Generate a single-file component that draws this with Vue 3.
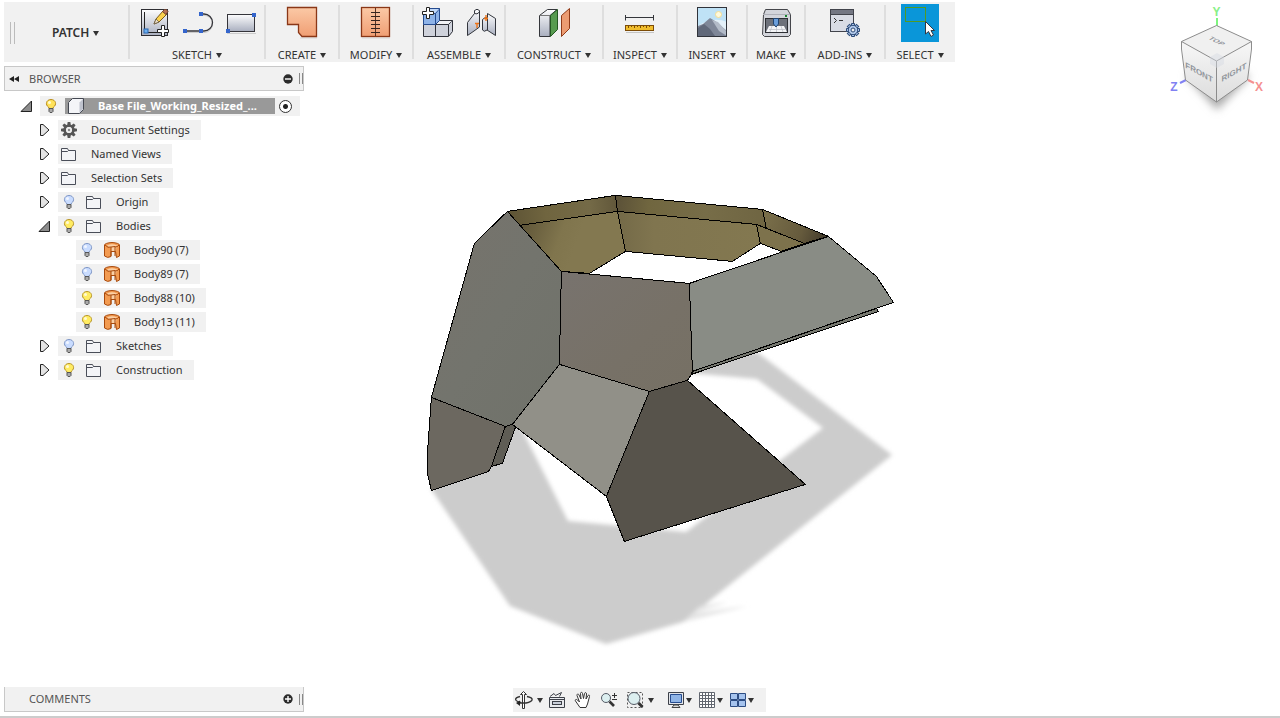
<script setup>
import { ref } from 'vue'

const groups = [
  { id: 'sketch', label: 'SKETCH', icons: ['newSketch', 'line', 'rect'] },
  { id: 'create', label: 'CREATE', icons: ['patch'] },
  { id: 'modify', label: 'MODIFY', icons: ['stitch'] },
  { id: 'assemble', label: 'ASSEMBLE', icons: ['component', 'joint'] },
  { id: 'construct', label: 'CONSTRUCT', icons: ['plane'] },
  { id: 'inspect', label: 'INSPECT', icons: ['measure'] },
  { id: 'insert', label: 'INSERT', icons: ['image'] },
  { id: 'make', label: 'MAKE', icons: ['printer'] },
  { id: 'addins', label: 'ADD-INS', icons: ['script'] },
  { id: 'select', label: 'SELECT', icons: ['select'] },
]

const tree = ref([
  { level: 1, name: 'Document Settings', icon: 'gear', open: false },
  { level: 1, name: 'Named Views', icon: 'folder', open: false },
  { level: 1, name: 'Selection Sets', icon: 'folder', open: false },
  { level: 1, name: 'Origin', icon: 'folder', bulb: 'off', open: false },
  { level: 1, name: 'Bodies', icon: 'folder', bulb: 'on', open: true },
  { level: 2, name: 'Body90 (7)', icon: 'body', bulb: 'off' },
  { level: 2, name: 'Body89 (7)', icon: 'body', bulb: 'off' },
  { level: 2, name: 'Body88 (10)', icon: 'body', bulb: 'on' },
  { level: 2, name: 'Body13 (11)', icon: 'body', bulb: 'on' },
  { level: 1, name: 'Sketches', icon: 'folder', bulb: 'off', open: false },
  { level: 1, name: 'Construction', icon: 'folder', bulb: 'on', open: false },
])

const teeth = [0, 45, 90, 135, 180, 225, 270, 315]

function toggleBulb(row) {
  row.bulb = row.bulb === 'on' ? 'off' : 'on'
}
</script>

<template>
  <div class="app">
    <svg class="scene" viewBox="0 0 1280 718" role="img" aria-label="Model">
      <defs>
        <filter id="soft" x="-10%" y="-10%" width="120%" height="120%"><feGaussianBlur stdDeviation="2" /></filter>
        <linearGradient id="gLeft" x1="0" y1="0" x2="1" y2="1"><stop offset="0" stop-color="#77736c" /><stop offset=".5" stop-color="#73746d" /><stop offset="1" stop-color="#70726a" /></linearGradient>
        <linearGradient id="gRimA" gradientUnits="userSpaceOnUse" x1="507" y1="215" x2="617" y2="205"><stop offset="0" stop-color="#5d5335" /><stop offset=".35" stop-color="#70653f" /><stop offset=".75" stop-color="#746a47" /><stop offset="1" stop-color="#61573a" /></linearGradient>
        <linearGradient id="gRimB" gradientUnits="userSpaceOnUse" x1="615" y1="205" x2="765" y2="220"><stop offset="0" stop-color="#5b5138" /><stop offset=".22" stop-color="#70663f" /><stop offset=".6" stop-color="#776d48" /><stop offset="1" stop-color="#6f6542" /></linearGradient>
        <linearGradient id="gRimC" gradientUnits="userSpaceOnUse" x1="763" y1="215" x2="827" y2="240"><stop offset="0" stop-color="#7a6f4a" /><stop offset=".6" stop-color="#665b3d" /><stop offset="1" stop-color="#40382a" /></linearGradient>
        <linearGradient id="gWallA" gradientUnits="userSpaceOnUse" x1="520" y1="225" x2="575" y2="245"><stop offset="0" stop-color="#5f5538" /><stop offset=".7" stop-color="#80754d" /><stop offset="1" stop-color="#837850" /></linearGradient>
        <linearGradient id="gWallB" gradientUnits="userSpaceOnUse" x1="618" y1="240" x2="760" y2="240"><stop offset="0" stop-color="#746a48" /><stop offset=".25" stop-color="#80754f" /><stop offset="1" stop-color="#837850" /></linearGradient>
        <linearGradient id="gMid" x1="0" y1="0" x2="1" y2="1"><stop offset="0" stop-color="#78736e" /><stop offset=".6" stop-color="#777167" /><stop offset="1" stop-color="#767064" /></linearGradient>
      </defs>

      <g filter="url(#soft)">
        <path fill="#ccc" fill-rule="evenodd" d="M431 489L510 606L606 644L683 622L892 455L757 352L690 350L512 400ZM519 424L568 521L686 532L823 428L757 379L690 373Z" />
        <path fill="#e4e4e4" d="M683 622L748 606L694 613L728 602L700 606Z" />
      </g>

      <g class="edges" transform="translate(.4 .4)">
        <path fill="url(#gWallA)" d="M507 211L519 225L617 211L625 251L589 273L561 271Z" />
        <path fill="url(#gWallB)" d="M617 211L756 224L760 243L732 261L625 251Z" />
        <path fill="#7d724c" d="M756 224L766 228L804 243L781 251L760 243Z" />
        <path fill="url(#gRimA)" d="M507 211L615 195L617 211L519 225Z" />
        <path fill="url(#gRimB)" d="M615 195L762 209L766 228L756 224L617 211Z" />
        <path fill="url(#gRimC)" d="M762 209L828 236L804 243L766 228Z" />
        <path fill="url(#gLeft)" d="M507 211L474 243L431 397L505 426L512 424L559 364L561 271Z" />
        <path fill="url(#gMid)" d="M561 271L689 283L692 371L691 374L687 380L649 391L559 364Z" />
        <path fill="#898c85" d="M689 283L828 236L876 276L893 302L692 371Z" />
        <path fill="#777970" d="M692 371L876 308L878 311L691 374Z" />
        <path fill="#919088" d="M559 364L649 391L606 496L512 424Z" />
        <path fill="#57534b" d="M649 391L687 380L805 484L624 541L606 496Z" />
        <path fill="#6c6860" d="M431 397L505 426L491 466L488 471L431 490L427 473V453Z" />
        <path fill="#5f5d55" d="M505 426L512 424L515 427L502 463L491 466Z" />
      </g>
    </svg>

    <header class="toolbar">
      <div class="workspace">
        <span class="grip"></span>
        <button class="label strong">PATCH<i class="caret"></i></button>
      </div>
      <div v-for="g in groups" :key="g.id" class="group">
        <div class="icons">
          <button v-for="ic in g.icons" :key="ic" class="tool" :aria-label="ic">
            <svg viewBox="0 0 38 38" width="38" height="38" fill="none">
              <defs>
                <linearGradient id="steel" x1="0" y1="0" x2="0" y2="1"><stop offset="0" stop-color="#fdfdfe" /><stop offset="1" stop-color="#a9afbf" /></linearGradient>
                <linearGradient id="peach" x1="0" y1="0" x2="0" y2="1"><stop offset="0" stop-color="#fbc9a6" /><stop offset="1" stop-color="#f09e73" /></linearGradient>
              </defs>
              <g v-if="ic === 'newSketch'">
                <rect x="6.500" y="5.500" width="26" height="26" fill="url(#steel)" stroke="#2e2e33" />
                <path d="M9.500 8V28.500H30" stroke="#222" />
                <rect x="9" y="25" width="4" height="4" fill="#6db0ef" stroke="#2767b4" />
                <path d="M19 20L21 15L28 7L32 10L24 18Z" fill="#fbd24c" stroke="#7b5a19" />
                <path d="M27.500 7.500L29.500 5.500H31.500L33 7.500L31 10.500Z" fill="#b97455" stroke="#714231" />
                <path d="M21 15L24 18L19 20Z" fill="#ece0c8" stroke="#5d5140" stroke-width=".7" />
                <path d="M26.500 21.500H29.500V25.500H33.500V28.500H29.500V32.500H26.500V28.500H22.500V25.500H26.500Z" fill="#fff" stroke="#222" />
              </g>
              <g v-else-if="ic === 'line'">
                <path d="M8 28.500H27C37 27 37 13 27 11.500H23" stroke="#ccc" />
                <path d="M7 27H26A8.500 8.500 0 0 0 26 10H23" stroke="#34343a" stroke-width="1.300" />
                <path d="M5 25h4v4h-4zM21 25h4v4h-4zM21 8h4v4h-4z" fill="#3465cc" />
              </g>
              <g v-else-if="ic === 'rect'">
                <path d="M6 29.500H35" stroke="#ccc" />
                <rect x="6.500" y="10.500" width="27" height="17" fill="url(#steel)" stroke="#34343a" />
                <path d="M5 25h4v4h-4zM31 9h4v4h-4z" fill="#3465cc" />
              </g>
              <g v-else-if="ic === 'patch'">
                <path d="M17 34H34" stroke="#d8d8d8" />
                <path d="M4.500 3.500H33.500V32.500H19L15.500 28.500V20.500H4.500Z" fill="url(#peach)" stroke="#8a3717" stroke-width="1.300" />
              </g>
              <g v-else-if="ic === 'stitch'">
                <path d="M5 34H33" stroke="#d8d8d8" />
                <rect x="4.500" y="3.500" width="28" height="29" fill="url(#peach)" stroke="#8a3717" stroke-width="1.300" />
                <path d="M18.500 4V32" stroke="#5b3425" />
                <path d="M14 8.500H23M14 12.500H23M14 16.500H23M14 20.500H23M14 24.500H23M14 28.500H23" stroke="#34241f" />
              </g>
              <g v-else-if="ic === 'component'" stroke="#30323a" stroke-linejoin="round">
                <path d="M16.500 20.500L20.500 16.500H33.500V27.500L29.500 32.500H4.500V20.500Z" fill="#cfd2db" />
                <path d="M16.500 32V20.500H29.500V32M29.500 20.500L33.500 16.500" />
                <path d="M17 20L21 17H33L29 20Z" fill="#f1f2f5" stroke="none" />
                <path d="M4.500 20.500V9.500L9.500 4.500H20.500V16.500L16.500 20.500Z" fill="#8eb3e8" stroke="#254b8f" />
                <path d="M4.500 9.500H16.500V20.500M16.500 9.500L20.500 4.500" stroke="#254b8f" />
                <path d="M6 9L10 5H20L16 9Z" fill="#c1d8f8" stroke="none" />
                <path d="M7.500 3.500H10.500V7.500H14.500V10.500H10.500V14.500H7.500V10.500H3.500V7.500H7.500Z" fill="#fff" stroke="#222" />
              </g>
              <g v-else-if="ic === 'joint'" stroke="#33363d" stroke-linejoin="round">
                <path d="M5.500 31.500V18.500L12.500 9.500V6.500Q15 4 17.500 6.500V23L12 27Z" fill="url(#steel)" />
                <path d="M12.500 9.500Q15 11 17.500 8" />
                <path d="M20.500 15.500Q22 13.500 25.500 13.500V9.500L33.500 14.500V31.500L25 26Q22 28.500 20.500 26Z" fill="url(#steel)" />
                <path d="M25.500 14V26" />
                <path d="M13 19.500H17M15 19V24M24 11V17M22 14.500H26" stroke="#ef7417" stroke-width="1.400" />
              </g>
              <g v-else-if="ic === 'plane'" stroke-linejoin="round">
                <path d="M4.500 11.500L12.500 5.500H22L15 11.500V32.500H4.500Z" fill="url(#steel)" stroke="#34363b" />
                <path d="M15.500 11.500L22.500 5.500V25.500L15.500 32.500Z" fill="#579b50" stroke="#245823" />
                <path d="M4.500 11.500H15" stroke="#777" />
                <path d="M26.500 11.500L34.500 4.500V24.500L26.500 32.500Z" fill="#ec9c72" stroke="#913b18" />
              </g>
              <g v-else-if="ic === 'measure'">
                <path d="M4.500 11V16.500M32.500 11V16.500M4.500 13.500H32.500" stroke="#34363b" />
                <path d="M5 28.500H33" stroke="#c5c5c5" />
                <rect x="4.500" y="21.500" width="28" height="5" fill="#f0bd2c" stroke="#7c4c08" />
                <path d="M7.500 22V24M10.500 22V23M13.500 22V24M16.500 22V23M19.500 22V24M22.500 22V23M25.500 22V24M28.500 22V23" stroke="#7c4c08" />
              </g>
              <g v-else-if="ic === 'image'">
                <rect x="5" y="4" width="29" height="28" fill="#bfe2f6" />
                <path d="M5 22Q20 12 34 18V32H5Z" fill="#e4f1f9" />
                <circle cx="25.500" cy="10.500" r="3" fill="#fff9dc" stroke="#f5de93" />
                <path d="M5 22L10 20L17 14L22 17L34 27V32H5Z" fill="#7f8798" />
                <path d="M5 24L11 20L17 25L22 32H5Z" fill="#606879" />
                <path d="M19 16L25 18L34 28V32L26 27Z" fill="#b3bbc8" />
                <rect x="4.500" y="3.500" width="29" height="29" stroke="#30333a" />
              </g>
              <g v-else-if="ic === 'printer'">
                <path d="M6.500 10.500L8.500 5.500H30.500L33.500 10.500V30.500L31.500 32.500H7.500L5.500 30.500Z" fill="#d3d5db" stroke="#45464b" />
                <path d="M6 10.500H33" stroke="#aeb0b8" />
                <rect x="8.500" y="14.500" width="22" height="14" fill="#6d717a" stroke="#2d2f34" />
                <path d="M12 22H27L30 28H9Z" fill="#f3f4f6" />
                <path d="M12 25.500H28M15 22L13 28M24 22L26 28M19.500 22V28" stroke="#b9bcc4" stroke-width=".7" />
                <path d="M16.500 14.500H21.500V20L19 23L16.500 20Z" fill="#6a9edb" stroke="#214572" />
                <path d="M28 11h2v2h-2z" fill="#16852d" />
              </g>
              <g v-else-if="ic === 'script'">
                <rect x="4.500" y="5.500" width="23" height="22" fill="#d9dce5" stroke="#42444c" />
                <path d="M5 6H27V10H5Z" fill="#747783" />
                <path d="M5 10.500H27" stroke="#42444c" />
                <path d="M8 14L10.500 16.500L8 19M13 16.500H17" stroke="#333" />
                <g transform="translate(27 26)">
                  <path v-for="a in teeth" :key="a" :transform="`rotate(${a})`" d="M-1.500 -4V-6.500H1.500V-4" fill="#b4cbec" stroke="#2c4a78" />
                  <circle r="4.700" fill="#b4cbec" stroke="#2c4a78" />
                  <circle r="2" fill="#f1f1f1" stroke="#2c4a78" />
                </g>
              </g>
              <g v-else>
                <rect width="38" height="38" fill="#0a96d9" />
                <rect x="4.500" y="3.500" width="20" height="14" stroke="#529a22" />
                <path d="M24.500 17.500V30L27.500 27.500L30 32.500L32.500 31L30 26.500H33.500Z" fill="#fff" stroke="#303842" stroke-linejoin="round" />
              </g>
            </svg>
          </button>
        </div>
        <button class="label">{{ g.label }}<i class="caret"></i></button>
      </div>
    </header>

    <aside class="browser">
      <div class="panel">
        <button class="bare rewind" aria-label="Collapse">
          <svg viewBox="0 0 10 6" width="10" height="6"><path d="M5 0V6L0 3ZM10 0V6L5 3Z" fill="#222" /></svg>
        </button>
        <span class="title">BROWSER</span>
        <button class="bare" aria-label="Hide browser">
          <svg viewBox="0 0 10 10" width="10" height="10"><circle cx="5" cy="5" r="4.700" fill="#2b2b2b" /><path d="M2 5H8" stroke="#fff" stroke-width="1.400" /></svg>
        </button>
        <span class="grip small"></span>
      </div>

      <ul class="tree">
        <li class="row level0">
          <button class="bare toggle open" aria-label="Collapse document"><svg viewBox="0 0 13 13" width="13" height="13"><path d="M11.500 1V11.500H1Z" fill="#8c8c8c" stroke="#222" /></svg></button>
          <div class="item root">
            <button class="bare bulb" aria-label="Visibility">
              <svg viewBox="0 0 12 16" width="12" height="16"><path d="M4 10.500L3.500 9C0 7 1 1.500 6 1.500S12 7 8.500 9L8 10.500Z" fill="#ffe25a" stroke="#b98d1c" /><circle cx="4.500" cy="4.500" r="1.500" fill="#fffbd5" /><path d="M4 10.500H8V13.500L7 14.500H5L4 13.500Z" fill="#aaa" stroke="#555" /></svg>
            </button>
            <span class="selected">
              <svg viewBox="0 0 18 18" width="18" height="18"><path d="M1.500 5.500L5.500 1.500H16.500V12.500L12.500 16.500H1.500Z" fill="#f4f5f8" stroke="#444852" stroke-linejoin="round" /><path d="M12.500 5.500L16 2V12L12.500 16Z" fill="#bfc3ce" /></svg>
              <span>Base File_Working_Resized_...</span>
            </span>
            <input type="radio" name="active" checked aria-label="Activate component">
          </div>
        </li>
        <li v-for="row in tree" :key="row.name" class="row" :class="'level' + row.level">
          <button v-if="row.level === 1" class="bare toggle" :class="{ open: row.open }" :aria-label="'Toggle ' + row.name">
            <svg v-if="row.open" viewBox="0 0 13 13" width="13" height="13"><path d="M11.500 1V11.500H1Z" fill="#8c8c8c" stroke="#222" /></svg>
            <svg v-else viewBox="0 0 10 14" width="10" height="14"><path d="M.500 1.500H3L9 7L3 12.500H.500Z" fill="#e3e3e3" stroke="#222" /></svg>
          </button>
          <span v-else class="toggle"></span>
          <div class="item">
            <button v-if="row.bulb" class="bare bulb" :aria-label="row.name + ' visibility'" @click="toggleBulb(row)">
              <svg viewBox="0 0 12 16" width="12" height="16">
                <path d="M4 10.500L3.500 9C0 7 1 1.500 6 1.500S12 7 8.500 9L8 10.500Z" :fill="row.bulb === 'on' ? '#ffec62' : '#c9dcff'" :stroke="row.bulb === 'on' ? '#b9962a' : '#7e96c6'" />
                <circle cx="4.500" cy="4.500" r="1.500" fill="#fff" fill-opacity=".75" />
                <path d="M4 10.500H8V13.500L7 14.500H5L4 13.500Z" fill="#aaa" stroke="#555" />
              </svg>
            </button>
            <svg class="kind" viewBox="0 0 18 18" width="18" height="18" fill="none">
              <template v-if="row.icon === 'gear'">
                <g transform="translate(9 9)" fill="#555"><path v-for="a in teeth" :key="a" :transform="`rotate(${a})`" d="M-2 -4L-1.300 -8H1.300L2 -4Z" /></g>
                <circle cx="9" cy="9" r="4.200" stroke="#555" stroke-width="2.600" />
                <circle cx="9" cy="9" r="2.900" fill="#eee" />
                <circle cx="9" cy="9" r="1.200" fill="#888" />
              </template>
              <template v-else-if="row.icon === 'folder'">
                <path d="M1.500 15.500V3.500H7.500L8.500 5.500H15.500V15.500Z" fill="#f3f4f7" stroke="#4a4e59" stroke-linejoin="round" />
                <path d="M2 6.500H7.500L8.500 5.500" stroke="#4a4e59" />
              </template>
              <template v-else>
                <path d="M1.500 4Q2 2 9 1.500Q16 2 16.500 4V15L13.500 16.500L12.500 10.500H8V15.500Q4.500 17.500 1.500 15Z" fill="#f39b51" stroke="#a84a0d" stroke-linejoin="round" />
                <path d="M4 4.500Q9 2 14 4.500L12.500 10H8V6.500Q6 7 4 4.500Z" fill="#fbd0a5" />
                <path d="M2 4Q5 7.500 8 6V15M8 6L12 5.500V15M12 6Q15 6 16 4" stroke="#a84a0d" />
              </template>
            </svg>
            <span class="name">{{ row.name }}</span>
          </div>
        </li>
      </ul>
    </aside>

    <svg class="cube" viewBox="0 0 110 120" width="110" height="120" role="img" aria-label="View cube">
      <defs>
        <filter id="cubeSoft" x="-30%" y="-30%" width="160%" height="160%"><feGaussianBlur stdDeviation="4" /></filter>
        <linearGradient id="cubeSide" x1="0" y1="0" x2="0" y2="1"><stop offset="0" stop-color="#f7f7f7" /><stop offset="1" stop-color="#dcdcdc" /></linearGradient>
      </defs>
      <path d="M16 76L47 62L80 76L47 110Z" fill="#aaa" filter="url(#cubeSoft)" />
      <path d="M47 18V26" stroke="#7df57d" stroke-width="2" />
      <path d="M16 80L10 83" stroke="#8181f2" stroke-width="2" />
      <path d="M78 80L84 83" stroke="#f59090" stroke-width="2" />
      <path d="M11.500 41.500L46.500 61V102L15.500 80Z" fill="url(#cubeSide)" />
      <path d="M81.500 41.500L46.500 61V102L77.500 80Z" fill="url(#cubeSide)" />
      <path d="M46.500 25.500L81.500 41.500L46.500 61L11.500 41.500Z" fill="#f0f0f0" />
      <path d="M46.500 25.500L81.500 41.500V49L77.500 80L46.500 102L15.500 80L11.500 49V41.500ZM11.500 41.500L46.500 61L81.500 41.500M46.500 61V102" fill="none" stroke="#8c8c8c" stroke-linejoin="round" />
      <path d="M47 53L54 57V64L47 68L40 64V57Z" fill="#d5dae2" fill-opacity=".45" />
      <text class="face" transform="translate(29 71) skewY(29)" text-anchor="middle" y="4">FRONT</text>
      <text class="face" transform="translate(64 71) skewY(-29)" text-anchor="middle" y="4">RIGHT</text>
      <text class="face" transform="matrix(.85 .42 -.75 .42 47 41)" text-anchor="middle" y="3">TOP</text>
      <text class="axis" x="46.500" y="16" text-anchor="middle" fill="#88f088">Y</text>
      <text class="axis" x="89" y="91" text-anchor="middle" fill="#f59090">X</text>
      <text class="axis" x="4" y="91" text-anchor="middle" fill="#8181f2">Z</text>
    </svg>

    <footer class="bottom">
      <div class="panel comments">
        <span class="title">COMMENTS</span>
        <button class="bare" aria-label="Show comments">
          <svg viewBox="0 0 10 10" width="10" height="10"><circle cx="5" cy="5" r="4.700" fill="#2b2b2b" /><path d="M2 5H8M5 2V8" stroke="#fff" stroke-width="1.400" /></svg>
        </button>
        <span class="grip small"></span>
      </div>

      <nav class="navbar" aria-label="Navigation">
        <button class="bare nav tight" aria-label="Orbit">
          <svg viewBox="0 0 20 20" width="20" height="20" fill="none"><path d="M8.500 18.500V4.500H6.500L9.500 1.500L12.500 4.500H10.500V18.500Z" fill="#fff" stroke="#333" /><path d="M6 6.500C0 8 0 11 7 12.500M13 6.500C20 8 20 11 12 13H5" stroke="#333" stroke-width="1.300" /><path d="M6 10.500V16L2 13Z" fill="#222" /></svg>
          <i class="caret"></i>
        </button>
        <button class="bare nav" aria-label="Look at">
          <svg viewBox="0 0 20 20" width="20" height="20" fill="none"><path d="M2.500 7.500H17.500V17.500H2.500Z" fill="#e8eaee" stroke="#3c4048" /><path d="M3 6.500L7 3.500L8.500 5.500L14.500 2.500L12.500 6.500M3 9.500H17" stroke="#3c4048" /><rect x="5.500" y="11.500" width="9" height="3" fill="#c9cfda" stroke="#3c4048" /></svg>
        </button>
        <button class="bare nav" aria-label="Pan">
          <svg viewBox="0 0 20 20" width="20" height="20"><path d="M7 17.500L2.500 11C1.500 9.500 3.500 9 4.500 10L6.500 12L4 5.500C3.500 4 5.500 3.500 6 5L8 9L7.500 3.500C7.500 2 9.500 2 9.500 3.500L10.500 8.500L11.500 3.500C12 2 13.500 2.500 13.500 4L13 9L15 5.500C16 4.500 17 5.500 16.500 6.500L14.500 14L13 17.500Z" fill="#fff" stroke="#333" stroke-linejoin="round" /></svg>
        </button>
        <button class="bare nav" aria-label="Zoom">
          <svg viewBox="0 0 20 20" width="20" height="20" fill="none"><circle cx="7" cy="8" r="4.500" fill="#dceff0" stroke="#555b66" /><path d="M10.500 11.500L15 16" stroke="#333" stroke-width="2.600" /><path d="M13 5.500H18M15.500 3V8M13 9.500H18" stroke="#333" /></svg>
        </button>
        <button class="bare nav wide" aria-label="Fit">
          <svg viewBox="0 0 20 20" width="20" height="20" fill="none"><rect x="2.500" y="2.500" width="15" height="15" stroke="#555" stroke-dasharray="2 2" /><circle cx="9" cy="8.500" r="6" fill="#dceff0" stroke="#555b66" /><path d="M13.500 13L17.500 17" stroke="#333" stroke-width="3" /></svg>
          <i class="caret"></i>
        </button>
        <span class="gap"></span>
        <button class="bare nav drop" aria-label="Display settings">
          <svg viewBox="0 0 20 20" width="20" height="20"><path d="M2.500 2.500H17.500V14.500H2.500Z" fill="#e2e5ea" stroke="#3c4048" /><path d="M4.500 4.500H15.500V12.500H4.500Z" fill="#8fb4e6" stroke="#254b8f" /><path d="M8 15H12L14 17.500H6Z" fill="#ddd" stroke="#444" /></svg>
          <i class="caret"></i>
        </button>
        <button class="bare nav drop" aria-label="Grid settings">
          <svg viewBox="0 0 20 20" width="20" height="20"><path d="M2.500 2.500H17.500V17.500H2.500ZM5.500 2.500V17.500M8.500 2.500V17.500M11.500 2.500V17.500M14.500 2.500V17.500M2.500 5.500H17.500M2.500 8.500H17.500M2.500 11.500H17.500M2.500 14.500H17.500" fill="#fff" stroke="#626770" /></svg>
          <i class="caret"></i>
        </button>
        <button class="bare nav drop" aria-label="Viewports">
          <svg viewBox="0 0 20 20" width="20" height="20"><path d="M2.500 3.500H9.500V9.500H2.500ZM10.500 3.500H17.500V9.500H10.500ZM2.500 10.500H9.500V16.500H2.500ZM10.500 10.500H17.500V16.500H10.500Z" fill="#a6c4ee" stroke="#2d4d83" /></svg>
          <i class="caret"></i>
        </button>
      </nav>
    </footer>
  </div>
</template>

<style>
body { background: #fff; }
</style>

<style scoped>
* { box-sizing: border-box; }
.app {
  position: relative;
  display: flex;
  flex-direction: column;
  min-height: 100vh;
  overflow: hidden;
  border-bottom: 2px solid #ccc;
  color: #333;
  font: 11px/16px "Noto Sans", "Open Sans", sans-serif;
}
button { padding: 0; border: 0; background: none; color: inherit; font: inherit; }
svg { display: block; flex: none; }
.scene { position: absolute; top: 0; left: 0; width: 100%; height: 100vh; }
.edges path { stroke: #000; stroke-width: 1; stroke-linejoin: round; shape-rendering: crispEdges; }

.toolbar, .browser, .bottom { position: relative; }
.toolbar {
  display: grid;
  grid-template-columns: 126px 136px 74px 74px 92px 98px 74px 70px 58px 80px 69px;
  align-self: flex-start;
  height: 60px;
  margin: 2px 4px 4px;
  background: #f1f1f1;
}
.workspace, .group { position: relative; }
.workspace::after, .group:not(:last-child)::after {
  content: "";
  position: absolute;
  top: 3px;
  right: 0;
  bottom: 4px;
  width: 2px;
  background: #dedede;
}
.workspace { display: flex; align-items: center; gap: 37px; padding-left: 6px; }
.grip { width: 5px; height: 22px; border: solid #bbb; border-width: 0 1px; }
.grip.small { width: 4px; height: 11px; border-color: #888; }
.group { display: flex; flex-direction: column; align-items: center; padding: 2px 2px 0 0; }
.group:last-child { padding-right: 1px; }
.icons { display: flex; gap: 5px; }
.label { display: flex; align-items: center; gap: 4px; white-space: nowrap; }
.group .label { margin-top: 5px; }
.strong { padding-top: 1px; font-size: 12px; font-weight: 600; }
.caret { flex: none; border: solid transparent; border-width: 5px 3px 0; border-top-color: #333; }

.browser { width: 304px; padding-left: 4px; }
.panel {
  display: flex;
  align-items: center;
  width: 300px;
  height: 25px;
  border: 1px solid #c8c8c8;
  background: #f1f1f1;
  color: #555;
}
.rewind { margin: 0 10px 0 4px; }
.title { flex: 1; }
.panel .grip { margin-left: 6px; }
.tree { display: flex; flex-direction: column; gap: 4px; margin: 5px 0 0; padding: 0; list-style: none; }
.row { display: flex; align-items: center; height: 20px; }
.level0 { padding-left: 14px; }
.level1 { padding-left: 32px; }
.level2 { padding-left: 50px; }
.toggle { display: flex; align-items: center; width: 22px; height: 20px; padding-left: 4px; }
.toggle.open { padding-left: 2px; }
.item { display: flex; align-items: center; height: 20px; padding-right: 11px; background: #f1f1f1; }
.bulb { display: flex; justify-content: center; width: 22px; }
.bulb + .kind { margin-left: 5px; }
.kind { margin: 0 13px 0 2px; }
.name { white-space: nowrap; }
.root { width: 260px; padding-right: 8px; }
.root .bulb { margin-right: 3px; }
.selected {
  display: flex;
  align-items: center;
  gap: 13px;
  flex: 1;
  height: 16px;
  padding-left: 2px;
  background: #999;
  color: #fff;
  font-weight: 700;
  white-space: nowrap;
}
input {
  width: 13px;
  height: 13px;
  margin: 0 0 0 4px;
  appearance: none;
  border: 1px solid #333;
  border-radius: 50%;
  background: radial-gradient(circle, #222 2px, #fff 3px);
}

.cube { position: absolute; top: 0; right: 0; }
.face { fill: #90959b; font: 700 8px "Liberation Sans", sans-serif; }
.axis { font: 700 12px "Liberation Sans", sans-serif; }

.bottom { display: grid; grid-template-columns: 1fr auto 1fr; align-items: end; margin-top: auto; padding: 0 5px 4px 4px; }
.comments { border-top: 0; padding-left: 24px; }
.navbar { display: flex; align-items: center; width: 253px; height: 24px; background: #f1f1f1; }
.nav { display: flex; align-items: center; width: 26px; padding-left: 3px; }
.tight { width: 31px; padding-left: 1px; gap: 3px; }
.wide { width: 34px; gap: 3px; }
.drop { width: 31px; }
.gap { width: 7px; }
</style>
